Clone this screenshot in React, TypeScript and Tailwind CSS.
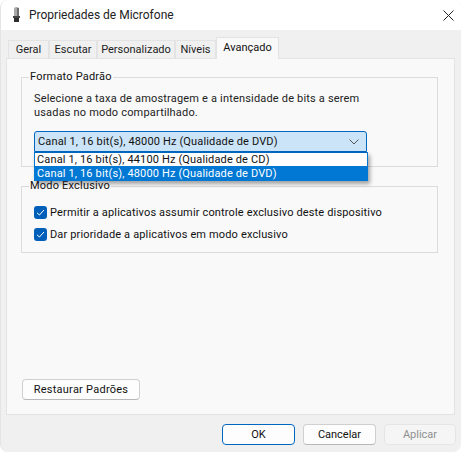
const font = { fontFamily: 'Roboto, sans-serif' };

const tabs = [
  { label: 'Geral', w: 'w-[41px]' },
  { label: 'Escutar', w: 'w-[48px]' },
  { label: 'Personalizado', w: 'w-[78px]' },
  { label: 'Níveis', w: 'w-[41px]' },
];

const Check = ({ label }: { label: string }) => (
  <div className="flex h-[14px] items-center gap-[3px]">
    <span className="flex h-[13px] w-[13px] items-center justify-center rounded-[3px] bg-[#005fb8]">
      <svg width="9" height="9" viewBox="0 0 9 9" fill="none" stroke="white" strokeWidth="1">
        <path d="M1 4.8 L3.4 7 L8 2" />
      </svg>
    </span>
    <span className="pt-[1px] tracking-[0.15px]">{label}</span>
  </div>
);

const Btn = ({ label, className }: { label: string; className: string }) => (
  <button className={`flex h-[21px] items-center justify-center rounded-[4px] border pt-[1px] ${className}`}>{label}</button>
);

export default function App() {
  return (
    <div className="h-[452px] w-[461px] overflow-hidden bg-white text-[11px] leading-[14px] text-[#111]" style={font}>
      <div className="flex h-full flex-col overflow-hidden rounded-t-[8px] rounded-b-[8px] border-l border-[#e4e4e4] bg-[#f0f0f0]">
        {/* title bar */}
        <div className="flex h-[30px] shrink-0 items-center bg-white pl-[12px] pr-[7px]">
          <svg width="8" height="15" viewBox="0 0 8 15" className="mt-[-1px]">
            <path d="M1 2a2.5 2 0 0 1 5 0v7H1z" fill="#a8a8a8" />
            <rect x="4" y="1" width="2" height="8" fill="#6e6e6e" />
            <rect x="0" y="9" width="7" height="2" fill="#444" />
            <rect x="1" y="11" width="5" height="4" fill="#2e2e2e" />
          </svg>
          <span className="ml-[8px] text-[12px] text-[#222]">Propriedades de Microfone</span>
          <svg width="11" height="11" viewBox="0 0 11 11" className="ml-auto" stroke="#222" strokeWidth="1">
            <path d="M0.5 0.5 L10.5 10.5 M10.5 0.5 L0.5 10.5" />
          </svg>
        </div>

        {/* tabs */}
        <div className="mt-[7px] flex h-[21px] items-end pl-[7px]">
          {tabs.map((t) => (
            <div
              key={t.label}
              className={`flex h-[18px] ${t.w} items-center justify-center border-t border-r border-l border-[#e3e3e3] bg-[#f0f0f0] pt-[1px] text-[#222]`}
            >
              {t.label}
            </div>
          ))}
          <div className="relative z-10 mb-[-1px] flex h-[22px] w-[63px] items-center justify-center border-x border-t border-[#e3e3e3] bg-[#f9f9f9] pb-[2px]">
            Avançado
          </div>
        </div>

        {/* panel */}
        <div className="relative ml-[5px] flex h-[357px] w-[449px] flex-col border border-[#e3e3e3] bg-[#f9f9f9] pt-[11px] pr-[16px] pl-[14px]">
          <fieldset className="h-[97px] border border-[#dcdcdc] pl-[12px]">
            <legend className="ml-[-5px] px-[1px] tracking-[0.2px]">Formato Padrão</legend>
            <p className="mt-[8px] tracking-[0.18px] text-[#222]">
              Selecione a taxa de amostragem e a intensidade de bits a serem
              <br />
              usadas no modo compartilhado.
            </p>
            <div className="relative mt-[11px] w-[333px]">
              <div className="flex h-[21px] items-center justify-between rounded-t-[3px] border border-[#0067c0] bg-[#cce4f7] pt-[1px] pr-[7px] pl-[3px]">
                <span className="tracking-[0.15px]">Canal 1, 16 bit(s), 48000 Hz (Qualidade de DVD)</span>
                <svg width="10" height="6" viewBox="0 0 10 6" fill="none" stroke="#555" strokeWidth="1">
                  <path d="M0.5 0.5 L5 5 L9.5 0.5" />
                </svg>
              </div>
              <div className="absolute top-[21px] left-0 z-20 w-[334px] border border-x-[#0078d4] border-t-[#0067c0] border-b-[#0078d4] bg-white shadow-[2px_3px_4px_rgba(0,0,0,0.35)]">
                <div className="flex h-[13px] items-center pt-[1px] pl-[2px] tracking-[0.15px] text-[#111]">
                  Canal 1, 16 bit(s), 44100 Hz (Qualidade de CD)
                </div>
                <div className="flex h-[14px] items-center bg-[#0078d4] pt-[1px] pl-[2px] tracking-[0.15px] text-white">
                  Canal 1, 16 bit(s), 48000 Hz (Qualidade de DVD)
                </div>
              </div>
            </div>
          </fieldset>

          <fieldset className="mt-[12px] h-[74px] border border-[#dcdcdc] pl-[12px]">
            <legend className="ml-[-5px] px-[1px] tracking-[0.2px]">Modo Exclusivo</legend>
            <div className="mt-[12px] flex flex-col gap-[8px]">
              <Check label="Permitir a aplicativos assumir controle exclusivo deste dispositivo" />
              <Check label="Dar prioridade a aplicativos em modo exclusivo" />
            </div>
          </fieldset>

          <Btn
            label="Restaurar Padrões"
            className="mt-auto mb-[14px] ml-[1px] w-[118px] border-[#d0d0d0] border-b-[#b8b8b8] bg-[#fdfdfd] tracking-[0.25px]"
          />
        </div>

        {/* footer */}
        <div className="mt-[9px] flex justify-end gap-[8px] pr-[5px]">
          <Btn label="OK" className="w-[73px] border-[#0067c0] bg-[#fdfdfd]" />
          <Btn label="Cancelar" className="w-[73px] border-[#d0d0d0] border-b-[#b8b8b8] bg-[#fdfdfd]" />
          <Btn label="Aplicar" className="w-[72px] border-[#e5e5e5] bg-[#f5f5f5] text-[#8f8f8f]" />
        </div>
      </div>
    </div>
  );
}
